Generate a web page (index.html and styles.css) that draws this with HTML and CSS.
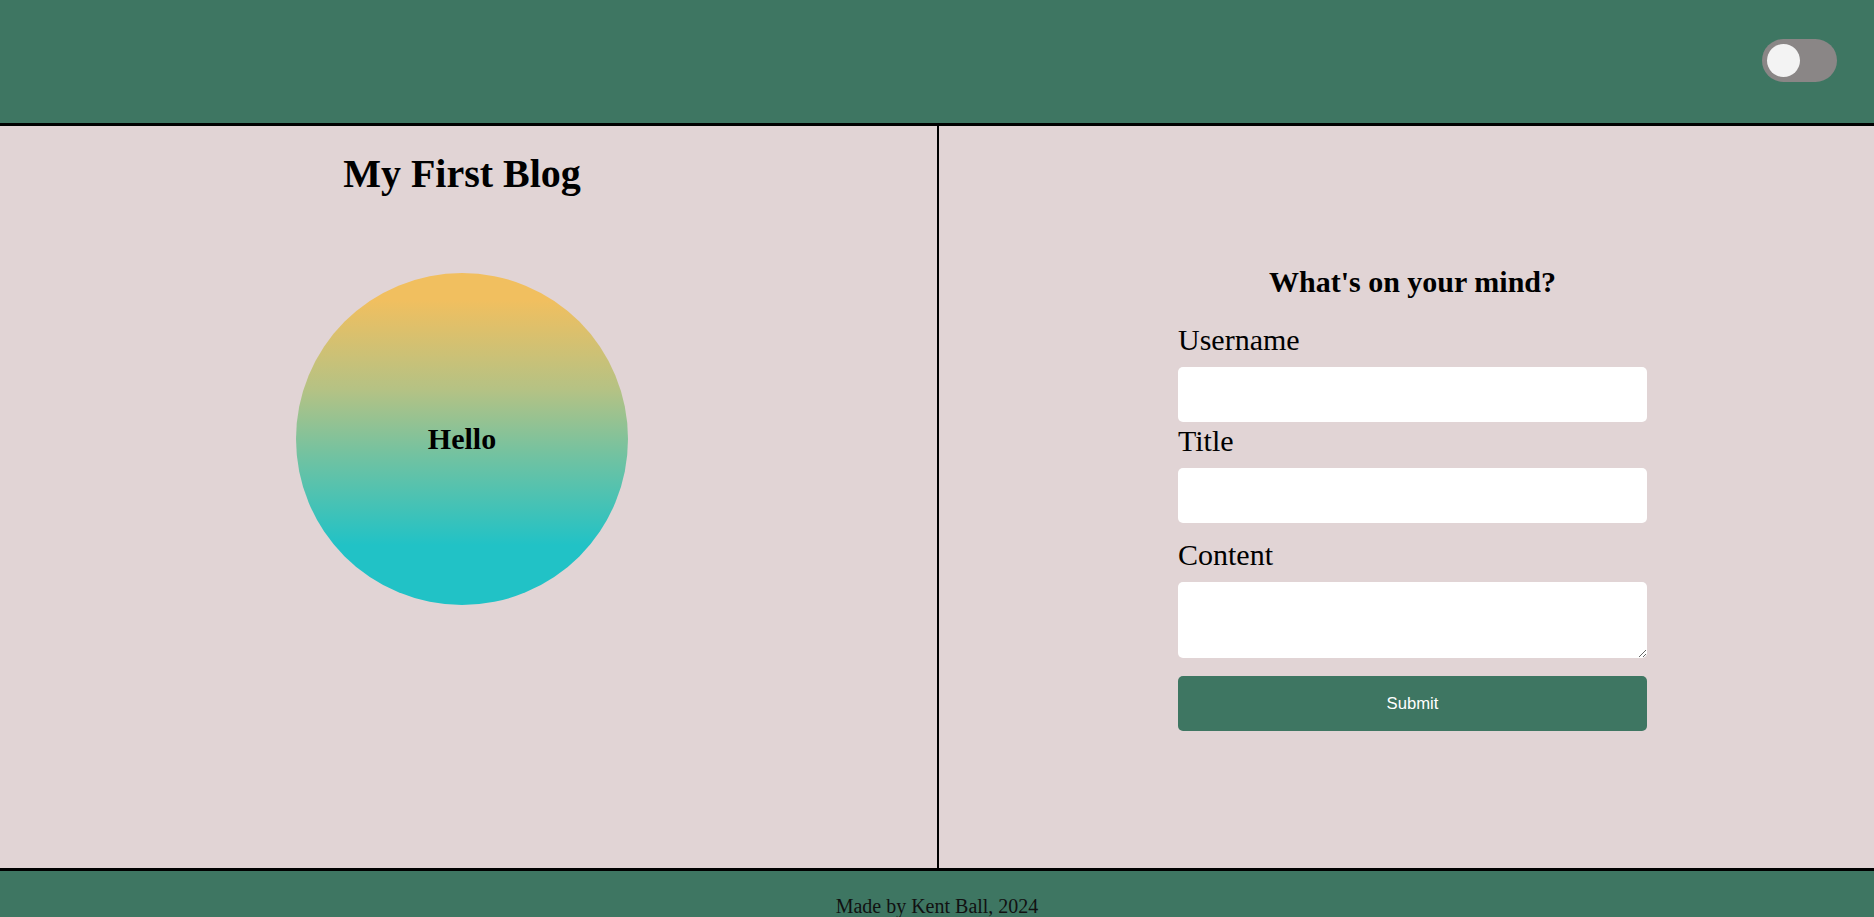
FILE: index.html
```html
<!DOCTYPE html>
<html lang="en">
<head>
<meta charset="utf-8">
<title>My First Blog</title>
<link rel="stylesheet" href="styles.css">
</head>
<body>
<header class="topbar">
  <label class="toggle">
    <input type="checkbox" class="toggle-input">
    <span class="toggle-track"><span class="toggle-knob"></span></span>
  </label>
</header>
<main class="main">
  <section class="panel panel-left">
    <h1 class="blog-title">My First Blog</h1>
    <div class="circle"><h2 class="circle-text">Hello</h2></div>
  </section>
  <section class="panel panel-right">
    <form class="post-form">
      <h2 class="form-title">What's on your mind?</h2>
      <label class="field-label" for="username">Username</label>
      <input class="field-input" id="username" type="text">
      <label class="field-label label-title" for="title">Title</label>
      <input class="field-input" id="title" type="text">
      <label class="field-label label-content" for="content">Content</label>
      <textarea class="field-area" id="content"></textarea>
      <button class="submit-btn" type="button">Submit</button>
    </form>
  </section>
</main>
<footer class="footer">
  <p class="footer-text">Made by Kent Ball, 2024</p>
</footer>
</body>
</html>
```
FILE: styles.css
```css
* { box-sizing: border-box; }
html, body { margin: 0; padding: 0; }
body {
  font-family: "Liberation Serif", "Times New Roman", serif;
  background: #e1d4d5;
  color: #000;
  overflow: hidden;
}
.topbar {
  height: 126px;
  background: #3e7662;
  border-bottom: 3px solid #000;
  display: flex;
  align-items: center;
  justify-content: flex-end;
  padding-right: 37px;
  padding-bottom: 2px;
}
.toggle { display: block; cursor: pointer; }
.toggle-input { display: none; }
.toggle-track {
  display: flex;
  align-items: center;
  width: 75px;
  height: 43px;
  border-radius: 22px;
  background: #8a8686;
  padding-left: 5px;
}
.toggle-knob {
  width: 33px;
  height: 33px;
  border-radius: 50%;
  background: #f3f3f3;
}
.main {
  display: flex;
  height: 742px;
}
.panel { height: 100%; }
.panel-left {
  width: 939px;
  border-right: 2px solid #000;
  padding-right: 13px;
  display: flex;
  flex-direction: column;
  align-items: center;
}
.panel-right {
  flex: 1;
  padding-left: 12px;
  display: flex;
  align-items: center;
  justify-content: center;
}
.blog-title {
  font-size: 40px;
  font-weight: bold;
  margin: 25px 0 0;
  line-height: 46px;
}
.circle {
  margin-top: 76px;
  width: 332px;
  height: 332px;
  border-radius: 50%;
  background: linear-gradient(to bottom, #f1bf5f 8%, #b5c284 35%, #72c2a1 55%, #21c2c6 82%);
  display: flex;
  align-items: center;
  justify-content: center;
}
.circle-text {
  margin: 0;
  font-size: 30px;
  font-weight: bold;
  line-height: 34px;
}
.post-form {
  width: 469px;
  display: flex;
  flex-direction: column;
  margin-top: 2px;
}
.form-title {
  margin: 0 0 23px;
  font-size: 30px;
  font-weight: bold;
  text-align: center;
  line-height: 34.5px;
}
.field-label {
  font-size: 30px;
  line-height: 34.5px;
  margin-bottom: 10px;
}
.label-title { margin-top: 2px; margin-bottom: 9px; }
.label-content { margin-top: 15px; }
.field-input {
  height: 55px;
  border: none;
  border-radius: 5px;
  background: #fff;
  font-size: 20px;
  padding: 0 10px;
}
.field-area {
  height: 76px;
  border: none;
  border-radius: 5px;
  background: #fff;
  font-size: 20px;
  padding: 10px;
  resize: vertical;
  display: block;
  font-family: "Liberation Mono", monospace;
}
.submit-btn {
  margin-top: 18px;
  height: 55px;
  border: none;
  border-radius: 5px;
  background: #3e7662;
  color: #fff;
  font-family: "Liberation Sans", Arial, sans-serif;
  font-size: 16.67px;
  cursor: pointer;
}
.footer {
  height: 49px;
  background: #3e7662;
  border-top: 3px solid #000;
  padding-top: 24px;
}
.footer-text {
  margin: 0;
  text-align: center;
  font-size: 20px;
  line-height: 23px;
  color: #111;
}
```
